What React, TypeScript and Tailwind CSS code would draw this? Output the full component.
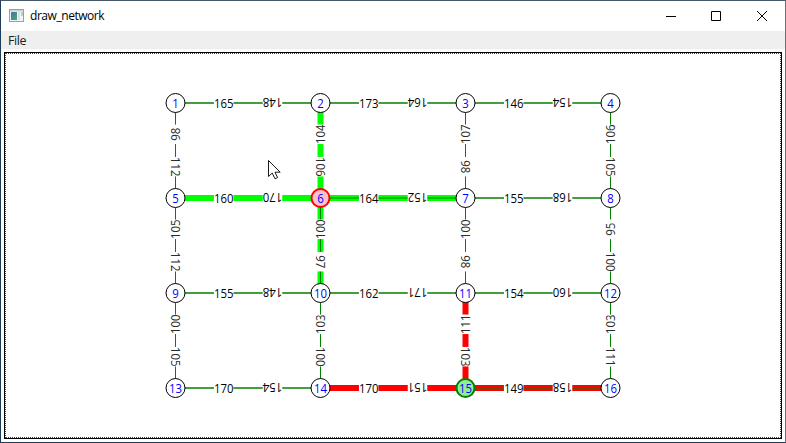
const XS = [175.5, 320.5, 465.5, 610.5];
const YS = [103, 198, 293, 388];

const ACROSS: [string, string][][] = [
  [['165', '148'], ['173', '164'], ['146', '154']],
  [['160', '170'], ['164', '152'], ['155', '168']],
  [['155', '148'], ['162', '171'], ['154', '160']],
  [['170', '154'], ['170', '151'], ['149', '158']],
];

const DOWN: [string, string][][] = [
  [['98', '112'], ['104', '106'], ['107', '98'], ['106', '105']],
  [['105', '112'], ['100', '97'], ['100', '98'], ['95', '100']],
  [['100', '105'], ['103', '100'], ['111', '103'], ['103', '111']],
];

type Style = { wide?: string; core?: string };
const ACROSS_STYLE: Record<string, Style> = {
  '1-0': { wide: '#00ff00' },
  '1-1': { wide: '#00ff00', core: '#00c000' },
  '3-1': { wide: '#ff0000' },
  '3-2': { wide: '#ff0000', core: '#7f4000' },
};
const DOWN_STYLE: Record<string, Style> = {
  '0-1': { wide: '#00ff00' },
  '1-1': { wide: '#00ff00', core: '#008000' },
  '2-2': { wide: '#ff0000' },
};

function Label({ x, y, angle, text }: { x: number; y: number; angle: number; text: string }) {
  return (
    <g transform={`translate(${x} ${y}) rotate(${angle})`}>
      <rect x="-9.75" y="-7" width="19.5" height="14" fill="#fff" />
      <text y="4.8" transform="scale(0.92 1)" textAnchor="middle" fill={angle % 180 ? '#2b2b2b' : '#000'}>{text}</text>
    </g>
  );
}

function Link({ x1, y1, x2, y2, look }: { x1: number; y1: number; x2: number; y2: number; look?: Style }) {
  const thin = y1 === y2 ? 1.5 : 1;
  return (
    <>
      {look?.wide && <line x1={x1} y1={y1} x2={x2} y2={y2} stroke={look.wide} strokeWidth="6" />}
      {(!look || look.core) && (
        <line x1={x1} y1={y1} x2={x2} y2={y2} stroke={look?.core ?? '#008000'} strokeWidth={look && y1 === y2 ? 2 : thin} />
      )}
    </>
  );
}

function Network() {
  return (
    <svg viewBox="6 54 774 383" className="block h-full w-full" fontSize="12.4">
      {ACROSS.map((row, r) => row.map((_, c) => (
        <Link key={`${r}-${c}`} x1={XS[c]} x2={XS[c + 1]} y1={YS[r]} y2={YS[r]} look={ACROSS_STYLE[`${r}-${c}`]} />
      )))}
      {DOWN.map((row, r) => row.map((_, c) => (
        <Link key={`${r}-${c}`} x1={XS[c]} x2={XS[c]} y1={YS[r]} y2={YS[r + 1]} look={DOWN_STYLE[`${r}-${c}`]} />
      )))}
      {ACROSS.map((row, r) => row.map(([a, b], c) => (
        <g key={`${r}-${c}`}>
          <Label x={XS[c] + 48.2} y={YS[r]} angle={0} text={a} />
          <Label x={XS[c] + 97} y={YS[r]} angle={180} text={b} />
        </g>
      )))}
      {DOWN.map((row, r) => row.map(([a, b], c) => (
        <g key={`${r}-${c}`}>
          <Label x={XS[c]} y={YS[r] + 31.3} angle={-90} text={a} />
          <Label x={XS[c]} y={YS[r] + 63.7} angle={90} text={b} />
        </g>
      )))}
      {YS.map((y, r) => XS.map((x, c) => {
        const n = r * 4 + c + 1;
        const fill = n === 6 ? '#ffc0cb' : n === 15 ? '#90ee90' : '#fff';
        const stroke = n === 6 ? '#ff0000' : n === 15 ? '#008000' : '#000';
        const picked = n === 6 || n === 15;
        return (
          <g key={n}>
            <circle cx={x} cy={y} r={picked ? 9 : 9.5} fill={fill} stroke={stroke} strokeWidth={picked ? 2 : 1} />
            <text transform={`translate(${x} ${y + 4.8}) scale(0.92 1)`} textAnchor="middle" fill="#0000ff">{n}</text>
          </g>
        );
      }))}
      <path d="M268.5 160.5V176.5L272.2 173L275 178.8L277.6 177.6L275 172.2H280.2Z" fill="#fff" stroke="#000" strokeWidth="0.9" />
    </svg>
  );
}

export default function App() {
  return (
    <div className="flex h-[443px] w-[786px] flex-col overflow-hidden border border-t-[#45586a] border-r-[#707070] border-b-[#1f3c58] border-l-[#1f3c58] bg-white font-['Open_Sans','Noto_Sans',sans-serif] text-[12px] text-black">
      <header className="flex h-[30px] shrink-0 items-center pl-2">
        <svg width="16" height="14" viewBox="0 0 16 14" className="shrink-0">
          <defs>
            <linearGradient id="pane" x1="0" y1="0" x2="1" y2="1">
              <stop offset="0" stopColor="#4775a5" />
              <stop offset="1" stopColor="#49a675" />
            </linearGradient>
          </defs>
          <rect x=".5" y=".5" width="14" height="12" fill="#f2f4f5" stroke="#9a9fa3" />
          <rect x="1" y="1" width="13" height="1.5" fill="#cbd0d4" />
          <rect x="2" y="3" width="6" height="8" fill="url(#pane)" />
          <rect x="9" y="3" width="2" height="8" fill="#dce3e8" />
          <rect x="12" y="3" width="2" height="4" fill="#b8d3c2" />
        </svg>
        <span className="ml-[5px] flex-1 tracking-[-0.45px]">draw_network</span>
        <svg width="120" height="12" viewBox="665 9 120 12" fill="none" stroke="#000" className="shrink-0">
          <path d="M666 15.5H676M711.5 10.5H720.5V19.5H711.5ZM757 10L767 20M767 10L757 20" />
        </svg>
      </header>
      <nav className="flex h-[18px] shrink-0 items-center bg-[#efefef] pl-[7px] text-[#222]">
        <span className="pt-[2px] text-[12.5px] leading-none tracking-[-0.4px]">File</span>
      </nav>
      <main className="mx-[3px] mt-[3px] h-[387px] w-[778px] shrink-0 border border-black">
        <div className="h-full border border-dotted border-[#444]">
          <Network />
        </div>
      </main>
    </div>
  );
}
